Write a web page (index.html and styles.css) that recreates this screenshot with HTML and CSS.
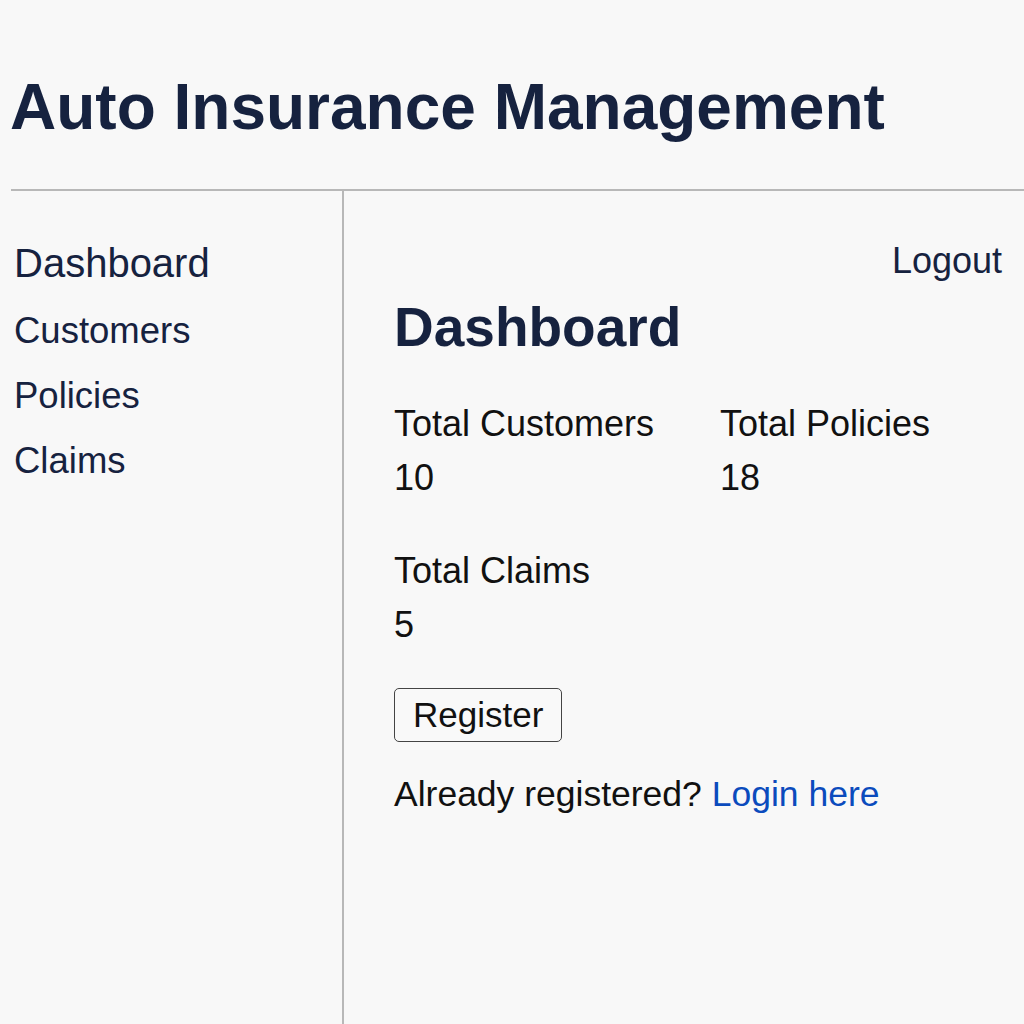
FILE: index.html
```html
<!DOCTYPE html>
<html lang="en">
<head>
<meta charset="utf-8">
<title>Auto Insurance Management</title>
<link rel="stylesheet" href="styles.css">
</head>
<body>
  <header class="site-header">
    <h1 class="site-title">Auto Insurance Management</h1>
  </header>
  <div class="layout">
    <nav class="sidebar">
      <a class="nav-link nav-link-active" href="#">Dashboard</a>
      <a class="nav-link" href="#">Customers</a>
      <a class="nav-link" href="#">Policies</a>
      <a class="nav-link" href="#">Claims</a>
    </nav>
    <main class="main">
      <div class="topbar"><a class="logout" href="#">Logout</a></div>
      <h2 class="page-title">Dashboard</h2>
      <div class="stats">
        <div class="stat">
          <div class="stat-label">Total Customers</div>
          <div class="stat-value">10</div>
        </div>
        <div class="stat">
          <div class="stat-label">Total Policies</div>
          <div class="stat-value">18</div>
        </div>
        <div class="stat">
          <div class="stat-label">Total Claims</div>
          <div class="stat-value">5</div>
        </div>
      </div>
      <button class="btn" type="button">Register</button>
      <p class="login-note">Already registered? <a class="login-link" href="#">Login here</a></p>
    </main>
  </div>
</body>
</html>
```

FILE: styles.css
```css
html, body {
  margin: 0;
  padding: 0;
}

body {
  background: #f8f8f8;
  font-family: "Liberation Sans", Arial, sans-serif;
  color: #111;
  min-height: 1024px;
}

.site-header {
  padding: 70px 0 0 10px;
}

.site-title {
  margin: 0 0 45px 0;
  font-size: 64px;
  line-height: 74px;
  font-weight: 700;
  color: #16223f;
}

.layout {
  display: flex;
  margin-left: 11px;
  border-top: 2px solid #b8b8b8;
  min-height: 835px;
}

.sidebar {
  flex: none;
  width: 333px;
  box-sizing: border-box;
  border-right: 2px solid #b8b8b8;
  padding: 40px 0 0 3px;
  display: flex;
  flex-direction: column;
}

.nav-link {
  font-size: 36.5px;
  line-height: 65px;
  color: #16223f;
  text-decoration: none;
}

.nav-link-active {
  font-size: 40px;
  margin-bottom: 2px;
}

.main {
  flex: 1;
  min-width: 0;
  padding: 49px 22px 0 50px;
}

.topbar {
  display: flex;
  justify-content: flex-end;
}

.logout {
  font-size: 36px;
  line-height: 41px;
  color: #16223f;
  text-decoration: none;
}

.page-title {
  margin: 15px 0 38px 0;
  font-size: 55px;
  line-height: 63px;
  font-weight: 700;
  color: #16223f;
}

.stats {
  display: grid;
  grid-template-columns: 326px 1fr;
  row-gap: 39px;
}

.stat-label,
.stat-value {
  font-size: 36px;
  line-height: 54px;
  color: #111;
}

.btn {
  display: block;
  margin-top: 36px;
  height: 54px;
  padding: 0 18px;
  font-family: "Liberation Sans", Arial, sans-serif;
  font-size: 35px;
  line-height: 52px;
  color: #111;
  background: #f9f9f9;
  border: 1px solid #444;
  border-radius: 5px;
}

.login-note {
  margin: 32px 0 0 0;
  font-size: 35.5px;
  line-height: 40px;
  color: #111;
}

.login-link {
  color: #0b4bbd;
  text-decoration: none;
}
```
